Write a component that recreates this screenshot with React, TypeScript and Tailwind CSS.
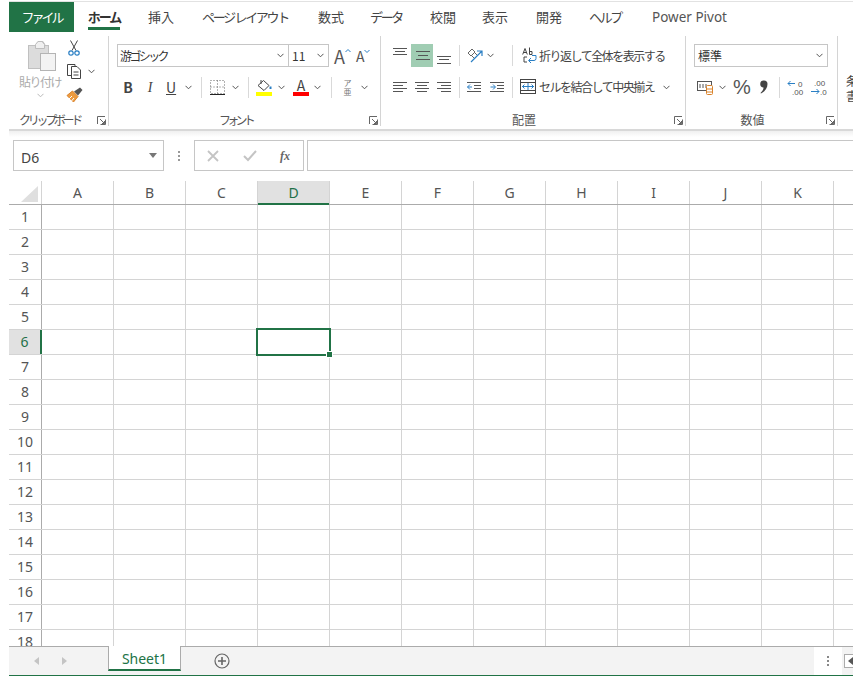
import type { ReactNode } from 'react';

const COLUMNS = ['A', 'B', 'C', 'D', 'E', 'F', 'G', 'H', 'I', 'J', 'K', ''];
const ROWS = Array.from({ length: 18 }, (_, i) => i + 1);
const TABS = [
  { label: 'ホーム', className: 'w-[60px] tracking-[-2px]' },
  { label: '挿入', className: 'w-[54px]' },
  { label: 'ページ レイアウト', className: 'w-[114px] tracking-[-2.3px]' },
  { label: '数式', className: 'w-[58px]' },
  { label: 'データ', className: 'w-[52px] tracking-[-2.3px]' },
  { label: '校閲', className: 'w-[62px]' },
  { label: '表示', className: 'w-[42px]' },
  { label: '開発', className: 'w-[66px]' },
  { label: 'ヘルプ', className: 'w-[46px] tracking-[-2.3px]' },
];

function Chevron({ className = '' }: { className?: string }) {
  return (
    <svg width="7" height="5" viewBox="0 0 7 5" className={`shrink-0 ${className}`}>
      <path d="M0.5 0.8 L3.5 3.8 L6.5 0.8" fill="none" stroke="#555" strokeWidth="1" />
    </svg>
  );
}

function Launcher() {
  return (
    <svg width="9" height="9" viewBox="0 0 9 9" className="justify-self-end">
      <path d="M0.5 8V0.5H8M8.5 3.5V8.5H3.5M3 3L7.5 7.5M7.5 5V7.5H5" fill="none" stroke="#666" strokeWidth="1" />
    </svg>
  );
}

function Sep({ className = '' }: { className?: string }) {
  return <div className={`w-px h-[21px] bg-[#d9d9d9] shrink-0 ${className}`} />;
}

function Lines({ rows, className = '' }: { rows: [number, number, number][]; className?: string }) {
  return (
    <svg width="15" height="15" viewBox="0 0 15 15" className={`shrink-0 ${className}`}>
      {rows.map(([a, b, y]) => (
        <path key={`${a}-${b}-${y}`} d={`M${a} ${y + 0.5}H${b}`} stroke="#555" strokeWidth="1" />
      ))}
    </svg>
  );
}

function Group({
  className,
  label,
  labelClass = '',
  children,
}: {
  className: string;
  label: string;
  labelClass?: string;
  children: ReactNode;
}) {
  return (
    <div className={`${className} h-[90px] flex flex-col shrink-0 border-r border-[#d4d4d4]`}>
      <div className="flex-1 min-h-0">{children}</div>
      <div className="h-[15px] grid grid-cols-[1fr_auto_1fr] items-center text-[12px] text-[#555] pr-[2px]">
        <span />
        <span className={`mr-[16px] whitespace-nowrap ${labelClass}`}>{label}</span>
        <Launcher />
      </div>
    </div>
  );
}

function ClipboardGroup() {
  return (
    <Group className="w-[100px]" label="クリップボード" labelClass="tracking-[-3.3px]">
      <div className="flex pt-[4px]">
        <div className="w-[44px] ml-[9px] flex flex-col items-center shrink-0">
          <svg width="30" height="31" viewBox="0 0 30 31" className="ml-[4px]">
            <path d="M9 5L11 1.5H16L18 5V9H9Z" fill="#e6e6e6" stroke="#bdbdbd" />
            <rect x="1.5" y="5.5" width="20" height="23" fill="#dcdcdc" stroke="#c0c0c0" />
            <path d="M8.5 4.5L11 1.5H15L17.5 4.5V8.5H8.5Z" fill="#f0f0f0" stroke="#bdbdbd" />
            <rect x="13.5" y="13.5" width="15" height="17" fill="#f3f3f3" stroke="#b4b4b4" />
          </svg>
          <span className="text-[12px] leading-[16px] mt-[3px] text-[#ababab] tracking-[-1.5px] whitespace-nowrap">貼り付け</span>
          <Chevron className="mt-[3px] opacity-40" />
        </div>
        <div className="ml-[4px] flex flex-col">
          <svg width="12" height="16" viewBox="0 0 12 16" className="ml-[2px]">
            <path d="M2.5 0.5L8 10.5M9.5 0.5L4 10.5" stroke="#444" fill="none" />
            <circle cx="3" cy="13" r="2.2" fill="none" stroke="#2a7fc4" strokeWidth="1.2" />
            <circle cx="9" cy="13" r="2.2" fill="none" stroke="#2a7fc4" strokeWidth="1.2" />
          </svg>
          <div className="flex items-center mt-[7px]">
            <svg width="16" height="16" viewBox="0 0 16 16">
              <path d="M5 12.5H1.5V1.5H9V3" fill="none" stroke="#444" />
              <path d="M5.5 3.5H11L14.5 7V15.5H5.5ZM7.5 9H12.5M7.5 12H12.5" fill="#fff" stroke="#444" />
            </svg>
            <Chevron className="ml-[6px]" />
          </div>
          <svg width="17" height="16" viewBox="0 0 17 16" className="mt-[8px]">
            <path d="M1 8.5L6.5 4L12 9.5L7.5 15Z" fill="#ed9b3f" stroke="#d9822b" />
            <path d="M3 12L6 9M5.5 14L8 11" stroke="#fff" />
            <path d="M8 4.5L14 0.5L16.5 3L12 8.5Z" fill="#555" />
          </svg>
        </div>
      </div>
    </Group>
  );
}

function FontGroup() {
  return (
    <Group className="w-[272px]" label="フォント" labelClass="tracking-[-3.7px]">
      <div className="flex items-center h-[23px] mt-[8px] pl-[8px]">
        <div className="w-[172px] h-[23px] border border-[#c6c6c6] flex items-center justify-between pl-[2px] pr-[4px] text-[12px] text-[#333] tracking-[-2.6px]">
          游ゴシック
          <Chevron />
        </div>
        <div className="w-[40px] h-[23px] border border-l-0 border-[#c6c6c6] flex items-center justify-between pl-[3px] pr-[4px] text-[12px] text-[#333]">
          11
          <Chevron />
        </div>
        <span className="ml-[5px] text-[18px] leading-none text-[#555]">A</span>
        <svg width="6" height="8" viewBox="0 0 6 8" className="mb-[8px]">
          <path d="M0.5 4L3 1.5L5.5 4" fill="none" stroke="#2a7fc4" />
        </svg>
        <span className="ml-[5px] text-[14px] leading-none text-[#555]">A</span>
        <svg width="6" height="8" viewBox="0 0 6 8" className="mb-[8px]">
          <path d="M0.5 2L3 4.5L5.5 2" fill="none" stroke="#2a7fc4" />
        </svg>
      </div>
      <div className="flex items-center h-[22px] mt-[9px] text-[#444]">
        <span className="ml-[14px] w-[10px] text-center text-[14px] font-bold">B</span>
        <span className="ml-[12px] w-[10px] text-center text-[14px] italic font-['Liberation_Serif',serif]">I</span>
        <span className="ml-[11px] w-[10px] text-center text-[14px] underline">U</span>
        <Chevron className="ml-[9px]" />
        <Sep className="ml-[9px]" />
        <svg width="15" height="15" viewBox="0 0 15 15" className="ml-[8px]">
          <path d="M0.5 0.5H14.5V13.5H0.5ZM7.5 0.5V13.5M0.5 7H14.5" fill="none" stroke="#666" strokeDasharray="1 2" />
          <path d="M0 14.5H15" stroke="#222" />
        </svg>
        <Chevron className="ml-[7px]" />
        <Sep className="ml-[9px]" />
        <div className="ml-[7px] w-[16px] flex flex-col items-center">
          <svg width="16" height="12" viewBox="0 0 16 12">
            <path d="M2 6.5L7.5 1.5L13 6.5L8 11.5Z" fill="#fff" stroke="#444" />
            <path d="M5 1V5" stroke="#444" />
            <path d="M14.5 7.5V10" stroke="#2a7fc4" strokeWidth="2" />
          </svg>
          <div className="w-[16px] h-[4px] mt-[1px] bg-[#ffff00]" />
        </div>
        <Chevron className="ml-[6px]" />
        <div className="ml-[8px] w-[16px] flex flex-col items-center">
          <span className="text-[14px] leading-[12px] text-[#444]">A</span>
          <div className="w-[16px] h-[4px] mt-[1px] bg-[#ff0000]" />
        </div>
        <Chevron className="ml-[5px]" />
        <Sep className="ml-[10px]" />
        <div className="ml-[11px] w-[9px] flex flex-col items-center text-[8px] leading-[9px] text-[#777]">
          <span>ア</span>
          <span>亜</span>
        </div>
        <Chevron className="ml-[9px]" />
      </div>
    </Group>
  );
}

function AlignGroup() {
  return (
    <Group className="w-[305px]" label="配置">
      <div className="flex items-center h-[23px] mt-[8px]">
        <Lines className="ml-[12px] mb-[4px]" rows={[[0, 14, 2], [2, 12, 5], [0, 14, 8]]} />
        <div className="ml-[3px] w-[22px] h-[23px] bg-[#a0cdb3] flex items-center justify-center">
          <Lines rows={[[1, 15, 3], [3, 13, 7], [1, 15, 11]]} />
        </div>
        <Lines className="ml-[4px] mt-[5px]" rows={[[0, 14, 5], [2, 12, 8], [0, 14, 12]]} />
        <Sep className="ml-[7px]" />
        <svg width="17" height="16" viewBox="0 0 17 16" className="ml-[7px]">
          <path d="M1 5L5 1L8 4L4 8ZM5 8L8 11M8 5L10 7" stroke="#666" fill="none" />
          <path d="M4 14L15 3M10 3H15V8" stroke="#2a7fc4" fill="none" strokeWidth="1.2" />
        </svg>
        <Chevron className="ml-[3px]" />
        <Sep className="ml-[18px]" />
        <svg width="15" height="17" viewBox="0 0 15 17" className="ml-[9px]">
          <path d="M10 8.5H14V11.5A2 2 0 0 1 12 13.5H7M9 11L6.5 13.5L9 16" stroke="#2a7fc4" fill="none" />
          <path d="M3 1.5L0.7 7.5M3 1.5L5.3 7.5M1.5 5.5H4.5M7.5 0.5V7.5M7.5 4.5H10V7.5H7.5M5 10H2V15H5" stroke="#444" fill="none" />
        </svg>
        <span className="ml-[2px] text-[12px] text-[#444] tracking-[-1.5px] whitespace-nowrap">折り返して全体を表示する</span>
      </div>
      <div className="flex items-center h-[22px] mt-[9px]">
        <Lines className="ml-[12px]" rows={[[0, 14, 2], [0, 10, 5], [0, 14, 8], [0, 10, 11]]} />
        <Lines className="ml-[7px]" rows={[[0, 14, 2], [2, 12, 5], [0, 14, 8], [2, 12, 11]]} />
        <Lines className="ml-[7px]" rows={[[0, 14, 2], [4, 14, 5], [0, 14, 8], [4, 14, 11]]} />
        <Sep className="ml-[7px]" />
        <svg width="15" height="15" viewBox="0 0 15 15" className="ml-[7px]">
          <path d="M0 2.5H14M7 5.5H14M7 8.5H14M0 11.5H14" stroke="#555" />
          <path d="M5 7H0.5M3 4.5L0.5 7L3 9.5" stroke="#2a7fc4" fill="none" />
        </svg>
        <svg width="15" height="15" viewBox="0 0 15 15" className="ml-[8px]">
          <path d="M0 2.5H14M7 5.5H14M7 8.5H14M0 11.5H14" stroke="#555" />
          <path d="M0.5 7H5M3 4.5L5.5 7L3 9.5" stroke="#2a7fc4" fill="none" />
        </svg>
        <Sep className="ml-[7px]" />
        <svg width="16" height="16" viewBox="0 0 16 16" className="ml-[7px]">
          <rect x="0.5" y="0.5" width="15" height="14" fill="none" stroke="#444" />
          <path d="M0.5 3.5H15.5M0.5 11.5H15.5" stroke="#444" />
          <path d="M2 7.5H14M4.5 5.5L2.5 7.5L4.5 9.5M11.5 5.5L13.5 7.5L11.5 9.5M8 4V11" stroke="#2a7fc4" fill="none" />
        </svg>
        <span className="ml-[3px] text-[12px] text-[#444] tracking-[-1.5px] whitespace-nowrap">セルを結合して中央揃え</span>
        <Chevron className="ml-[9px]" />
      </div>
    </Group>
  );
}

function NumberGroup() {
  return (
    <Group className="w-[152px]" label="数値">
      <div className="flex items-center h-[23px] mt-[8px] pl-[8px]">
        <div className="w-[134px] h-[23px] border border-[#c6c6c6] flex items-center justify-between pl-[3px] pr-[4px] text-[12px] text-[#333]">
          標準
          <Chevron />
        </div>
      </div>
      <div className="flex items-center h-[22px] mt-[9px] text-[#444]">
        <svg width="17" height="15" viewBox="0 0 17 15" className="ml-[11px]">
          <rect x="0.5" y="1.5" width="14" height="9" fill="none" stroke="#555" />
          <path d="M3 4V8M6 4V8M9 4V8" stroke="#555" />
          <rect x="9.5" y="5.5" width="6" height="9" rx="1" fill="#fff" stroke="#d9822b" />
          <path d="M9.5 9H15.5M9.5 12H15.5" stroke="#d9822b" />
        </svg>
        <Chevron className="ml-[5px]" />
        <span className="ml-[7px] w-[18px] text-[20px] leading-none text-[#555] font-['Liberation_Sans',sans-serif]">%</span>
        <svg width="8" height="14" viewBox="0 0 8 14" className="ml-[9px]">
          <path d="M4 0.5A3.5 3.5 0 0 1 7.5 4C7.5 8 5 11.5 1 13.5L0.5 13C2.5 11 3.5 9.5 3.5 7.5A3.5 3.5 0 0 1 4 0.5Z" fill="#444" />
        </svg>
        <Sep className="ml-[11px]" />
        <svg width="17" height="17" viewBox="0 0 17 17" className="ml-[7px]">
          <path d="M8 4.5H1M3.5 2L1 4.5L3.5 7" stroke="#2a7fc4" fill="none" />
          <text x="11" y="8" fontSize="8" fill="#555" fontFamily="Liberation Sans">0</text>
          <text x="5" y="16" fontSize="8" fill="#555" fontFamily="Liberation Sans">.00</text>
        </svg>
        <svg width="17" height="17" viewBox="0 0 17 17" className="ml-[6px]">
          <text x="4" y="7" fontSize="8" fill="#555" fontFamily="Liberation Sans">.00</text>
          <path d="M1 12.5H9M6.5 10L9 12.5L6.5 15" stroke="#2a7fc4" fill="none" />
          <text x="10" y="16" fontSize="8" fill="#555" fontFamily="Liberation Sans">.0</text>
        </svg>
      </div>
    </Group>
  );
}

function FormulaBar() {
  return (
    <div className="h-[31px] flex items-stretch pl-[4px]">
      <div className="w-[151px] border border-[#c6c6c6] flex items-center justify-between pl-[7px] pr-[6px] text-[14px] text-[#444] font-['Noto_Sans',sans-serif]">
        <span className="pt-[3px]">D6</span>
        <svg width="8" height="5" viewBox="0 0 8 5">
          <path d="M0 0H8L4 5Z" fill="#777" />
        </svg>
      </div>
      <div className="w-[30px] flex flex-col items-center justify-center gap-[2px]">
        <div className="w-[2px] h-[2px] bg-[#999]" />
        <div className="w-[2px] h-[2px] bg-[#999]" />
        <div className="w-[2px] h-[2px] bg-[#999]" />
      </div>
      <div className="w-[110px] border border-[#c6c6c6] flex items-center">
        <svg width="12" height="12" viewBox="0 0 12 12" className="ml-[12px]">
          <path d="M1 1L11 11M11 1L1 11" stroke="#c4c4c4" strokeWidth="1.8" />
        </svg>
        <svg width="14" height="12" viewBox="0 0 14 12" className="ml-[24px]">
          <path d="M1 6L5 10L13 1" fill="none" stroke="#c4c4c4" strokeWidth="2" />
        </svg>
        <span className="ml-[23px] text-[12px] italic font-bold text-[#666] font-['Liberation_Serif',serif]">fx</span>
      </div>
      <div className="flex-1 ml-[3px] border border-r-0 border-[#c6c6c6]" />
    </div>
  );
}

function Sheet() {
  return (
    <div className="relative h-[465px] overflow-hidden bg-white font-['Noto_Sans',sans-serif]">
      <div className="flex h-[24px] border-b border-[#ababab]">
        <div className="w-[33px] shrink-0 flex items-end justify-end pr-[3px] pb-[2px] border-r border-[#d4d4d4]">
          <svg width="17" height="16" viewBox="0 0 17 16">
            <path d="M17 0V16H0Z" fill="#dfdfdf" />
          </svg>
        </div>
        {COLUMNS.map((c) => (
          <div
            key={c}
            className={
              c === 'D'
                ? 'w-[72px] shrink-0 flex items-center justify-center pb-[1px] bg-[#e1e1e1] border-r border-[#d4d4d4] text-[14px] text-[#1f7048] relative'
                : 'w-[72px] shrink-0 flex items-center justify-center pb-[1px] border-r border-[#d4d4d4] text-[14px] text-[#555]'
            }
          >
            {c}
            {c === 'D' && <div className="absolute left-0 right-0 -bottom-px h-[2px] bg-[#217346]" />}
          </div>
        ))}
      </div>
      {ROWS.map((r) => (
        <div key={r} className="flex h-[25px] shrink-0 border-b border-[#d4d4d4]">
          <div
            className={
              r === 6
                ? 'w-[33px] shrink-0 flex items-center justify-center pb-[1px] bg-[#e1e1e1] border-r-2 border-[#217346] text-[14px] text-[#1f7048]'
                : 'w-[33px] shrink-0 flex items-center justify-center pb-[1px] border-r border-[#ababab] text-[14px] text-[#555]'
            }
          >
            {r}
          </div>
          {COLUMNS.map((c) => (
            <div key={c} className="w-[72px] shrink-0 border-r border-[#d4d4d4]" />
          ))}
        </div>
      ))}
      <div className="absolute left-[247px] top-[147px] w-[75px] h-[28px] border-2 border-[#217346]" />
      <div className="absolute left-[318px] top-[171px] w-[5px] h-[5px] bg-[#217346] outline outline-white" />
    </div>
  );
}

function TabBar() {
  return (
    <div className="h-[30px] flex bg-[#f3f3f3] border-t border-[#ababab] border-b border-b-[#217346] font-['Noto_Sans',sans-serif]">
      <div className="w-[99px] shrink-0 flex items-center">
        <svg width="5" height="8" viewBox="0 0 5 8" className="ml-[25px]">
          <path d="M5 0V8L0 4Z" fill="#c4c4c4" />
        </svg>
        <svg width="5" height="8" viewBox="0 0 5 8" className="ml-[23px]">
          <path d="M0 0V8L5 4Z" fill="#c4c4c4" />
        </svg>
      </div>
      <div className="w-[73px] h-[25px] -mt-px shrink-0 bg-white border-x border-[#ababab] border-b-2 border-b-[#217346] flex items-center justify-center pt-[2px] text-[14px] text-[#217346]">
        Sheet1
      </div>
      <div className="w-[633px] shrink-0 flex items-center">
        <svg width="16" height="16" viewBox="0 0 16 16" className="ml-[33px]">
          <circle cx="8" cy="8" r="7" fill="none" stroke="#666" strokeWidth="1.2" />
          <path d="M8 4V12M4 8H12" stroke="#666" strokeWidth="1.6" />
        </svg>
      </div>
      <div className="w-[28px] shrink-0 bg-white flex flex-col items-center justify-center gap-[2px]">
        <div className="w-[2px] h-[2px] bg-[#888]" />
        <div className="w-[2px] h-[2px] bg-[#888]" />
        <div className="w-[2px] h-[2px] bg-[#888]" />
      </div>
      <div className="flex-1 flex items-center pl-[2px]">
        <div className="w-[12px] h-[14px] shrink-0 bg-white border border-[#ababab] flex items-center pl-[3px]">
          <svg width="5" height="8" viewBox="0 0 5 8">
            <path d="M5 0V8L0 4Z" fill="#555" />
          </svg>
        </div>
      </div>
    </div>
  );
}

export default function App() {
  return (
    <div className="w-[862px] h-[676px] overflow-hidden bg-white pt-[1px] font-['Noto_Sans_CJK_JP','Noto_Sans',sans-serif]">
      <div className="w-[844px] h-[675px] ml-[9px] overflow-hidden border-t border-[#e2e2e2]">
        {/* Tabs */}
        <div className="flex items-center h-[30px] text-[13px] text-[#444]">
          <div className="w-[65px] h-[30px] bg-[#217346] text-white flex items-center justify-center tracking-[-3px]">ファイル</div>
          {TABS.map((t, i) => (
            <div key={t.label} className={`${t.className} h-[30px] flex items-center justify-center whitespace-nowrap`}>
              <span className={i === 0 ? 'font-bold text-[#333] border-b-[3px] border-[#217346] leading-[20px] mt-[3px]' : ''}>{t.label}</span>
            </div>
          ))}
          <div className="ml-[24px] font-['Noto_Sans',sans-serif] text-[13.5px] text-[#555] whitespace-nowrap">Power Pivot</div>
        </div>

        {/* Ribbon */}
        <div className="flex h-[97px] pt-[4px] overflow-hidden">
          <ClipboardGroup />
          <FontGroup />
          <AlignGroup />
          <NumberGroup />
          <div className="pl-[8px] pt-[37px] text-[12px] leading-[15px] text-[#444] whitespace-nowrap">
            条件付き
            <br />
            書式
          </div>
        </div>
        <div className="h-[8px] border-t-2 border-[#d8d8d8] bg-linear-to-b from-[#f0f0f0] to-white" />

        <div className="h-[3px]" />
        <FormulaBar />
        <div className="h-[10px]" />
        <Sheet />
        <TabBar />
      </div>
    </div>
  );
}
